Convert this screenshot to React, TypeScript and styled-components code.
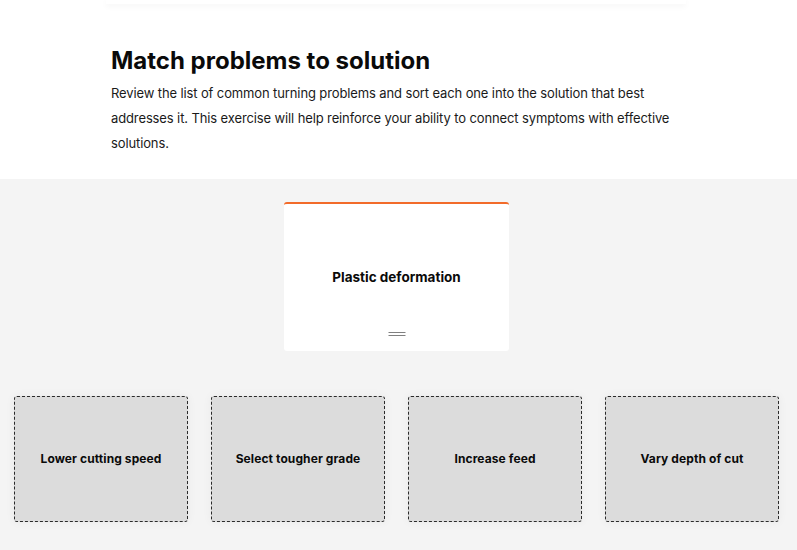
import React from 'react';
import styled, { createGlobalStyle } from 'styled-components';

const GlobalStyle = createGlobalStyle`
  html, body {
    margin: 0;
    padding: 0;
    background: #ffffff;
    font-family: Inter, "Noto Sans", Arial, sans-serif;
    color: #111;
  }
`;

const Intro = styled.section`
  background: #ffffff;
  padding-bottom: 23px;
`;

const PrevCard = styled.div`
  width: 580px;
  height: 4px;
  margin-left: calc(50% - 293px);
  background: #ffffff;
  box-shadow: 0 2px 6px rgba(0, 0, 0, 0.05);
`;

const Column = styled.div`
  width: 575px;
  margin: 0 auto;
`;

const Title = styled.h2`
  margin: 43px 0 5px;
  font-size: 24px;
  line-height: 28.8px;
  font-weight: 700;
  color: #0a0a0a;
`;

const Lead = styled.p`
  margin: 0;
  font-size: 13px;
  letter-spacing: -0.12px;
  line-height: 25px;
  color: #1a1a1a;
`;

const Board = styled.section`
  background: #f4f4f4;
  padding: 23px 18px 29px 14px;
  display: flex;
  flex-direction: column;
  align-items: center;
  gap: 45px;
`;

const Card = styled.div`
  width: 225px;
  height: 149px;
  box-sizing: border-box;
  background: #ffffff;
  border-top: 2px solid #f26b2a;
  border-radius: 3px;
  display: flex;
  flex-direction: column;
  align-items: center;
  justify-content: center;
  position: relative;
`;

const CardLabel = styled.span`
  font-size: 13.5px;
  font-weight: 700;
  color: #0a0a0a;
`;

const Handle = styled.div`
  position: absolute;
  bottom: 15px;
  left: 50%;
  transform: translateX(-50%);
  width: 17px;
  height: 2px;
  border-top: 1px solid #808080;
  border-bottom: 1px solid #808080;
`;

const Zones = styled.div`
  align-self: stretch;
  display: grid;
  grid-template-columns: repeat(4, 1fr);
  gap: 23px;
`;

const Zone = styled.div`
  height: 126px;
  box-sizing: border-box;
  background: #dcdcdc;
  border: 1px dashed #2a2a2a;
  border-radius: 3px;
  box-shadow: 0 0 10px rgba(0, 0, 0, 0.05);
  display: flex;
  align-items: center;
  justify-content: center;
  text-align: center;
  font-size: 12px;
  letter-spacing: 0.1px;
  font-weight: 700;
  color: #0a0a0a;
`;

const solutions = [
  'Lower cutting speed',
  'Select tougher grade',
  'Increase feed',
  'Vary depth of cut',
];

const App = () => {
  return (
    <>
      <GlobalStyle />
      <Intro>
        <PrevCard />
        <Column>
          <Title>Match problems to solution</Title>
          <Lead>
            Review the list of common turning problems and sort each one into the solution that best
            addresses it. This exercise will help reinforce your ability to connect symptoms with
            effective solutions.
          </Lead>
        </Column>
      </Intro>
      <Board>
        <Card>
          <CardLabel>Plastic deformation</CardLabel>
          <Handle />
        </Card>
        <Zones>
          {solutions.map((s) => (
            <Zone key={s}>{s}</Zone>
          ))}
        </Zones>
      </Board>
    </>
  );
};

export default App;
